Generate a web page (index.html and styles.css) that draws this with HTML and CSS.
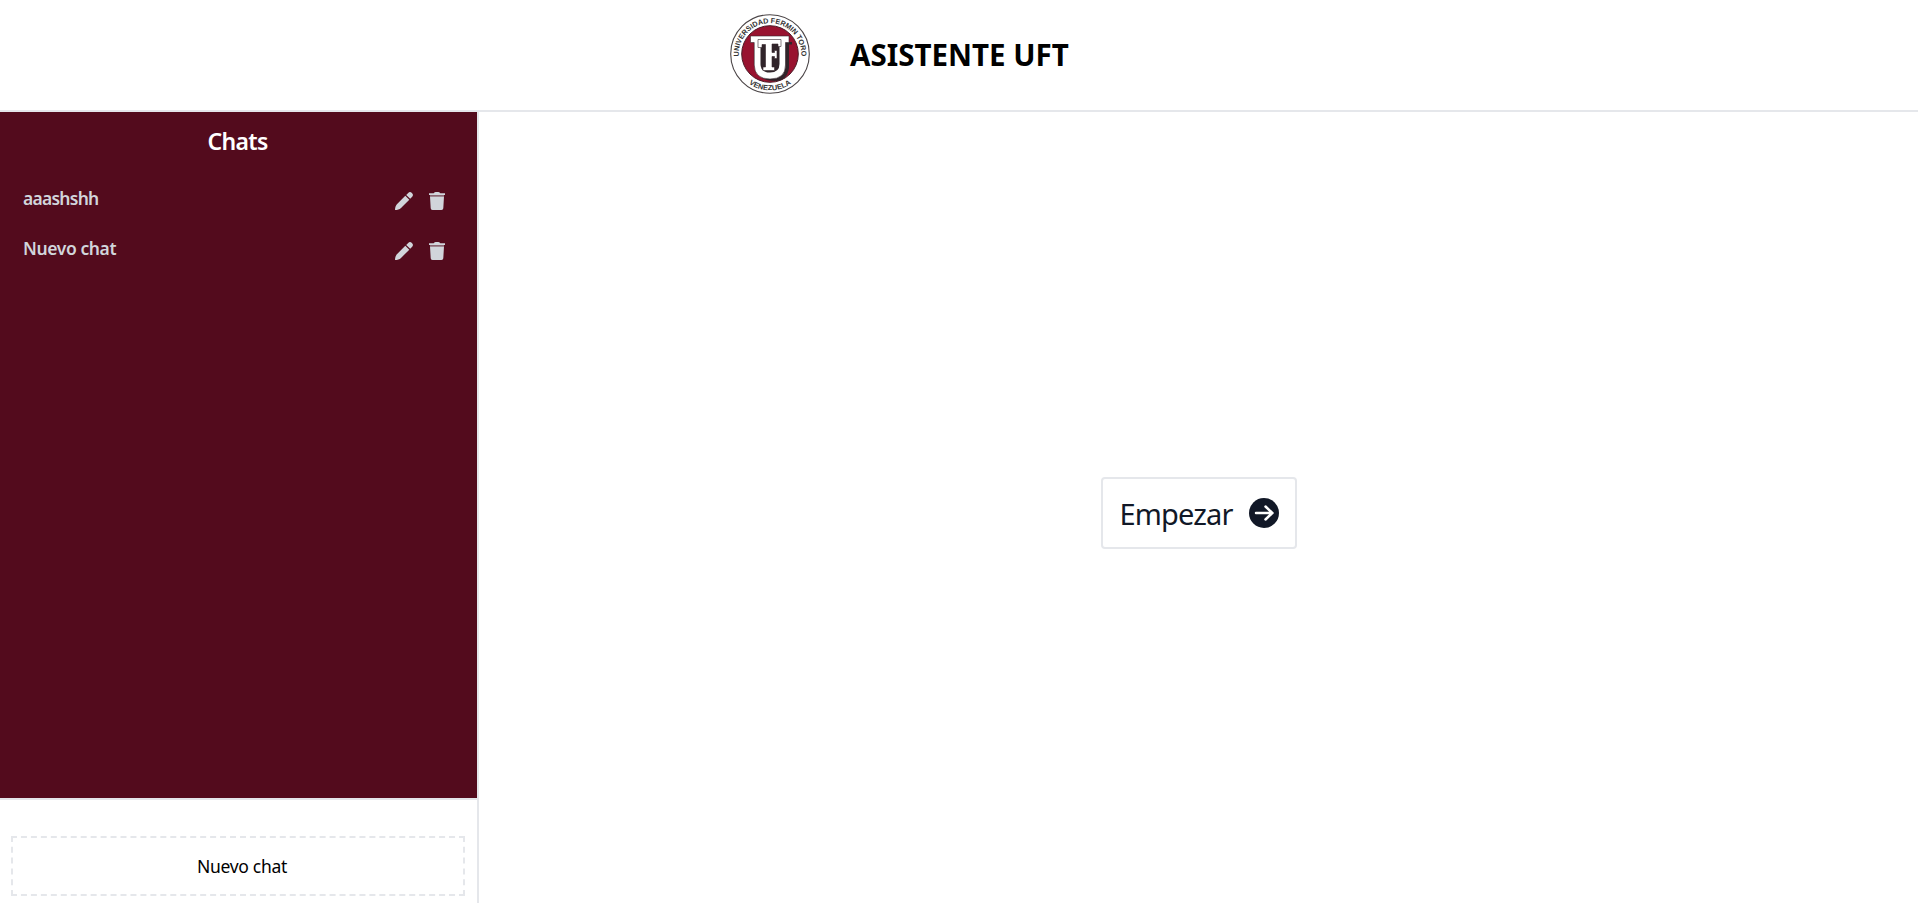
FILE: index.html
```html
<!DOCTYPE html>
<html lang="es">
<head>
<meta charset="utf-8">
<title>Asistente UFT</title>
<link rel="stylesheet" href="styles.css">
</head>
<body>
<svg class="sprite" aria-hidden="true">
  <symbol id="pencil" viewBox="0 0 18 18"><path d="M10.3 3.800 14.300 7.700 6 15.900C4.600 17.300 2.400 17.900 0 18c.1-2.300.6-4.500 1.900-5.800zM11.200 2.900l2-2c1.200-1.200 2.500-1.100 3.700.1s1.500 2.500.3 3.700l-2 2.100z"/></symbol>
  <symbol id="trash" viewBox="0 0 16 18"><path d="M0 1.300h4.700C5.200.3 6 0 8 0s2.800.3 3.300 1.300H16V3H0z"/><path opacity=".45" d="M1 3h14v1.500H1z"/><path d="M1 4.500h14l-.7 11.700Q14.200 18 12.500 18h-9Q1.800 18 1.700 16.200z"/></symbol>
</svg>
<header class="header">
  <svg class="logo" viewBox="0 0 80 80">
    <defs>
      <path id="arc-top" d="M8.800 43A31.300 31.300 0 1 1 71.200 43"/>
      <path id="arc-bottom" d="M12 63.300A36.400 36.400 0 0 0 68 63.300"/>
    </defs>
    <circle class="ring" cx="40" cy="40" r="39.300"/>
    <circle class="disc" cx="40" cy="40" r="28.300"/>
    <text class="seal-text"><textPath href="#arc-top" startOffset="50%" textLength="102" lengthAdjust="spacingAndGlyphs">UNIVERSIDAD FERMIN TORO</textPath></text>
    <text class="seal-text"><textPath href="#arc-bottom" startOffset="50%" textLength="45" lengthAdjust="spacingAndGlyphs">VENEZUELA</textPath></text>
    <path class="mono-shadow" d="M24 28h38v2.500h-3V54q-2 13-14 13-9 0-14-4L24 50z"/>
    <path class="mono" d="M20.500 22h38.500v6.500h-3.500V51q0 14-15.500 14T24.200 51V28.500h-3.700z"/>
    <path class="mono-shadow" d="M30.500 28h19v22q0 8.500-9.500 8.500t-9.500-8.500z"/>
    <path class="mono letters" d="M28 25.500h23v7h-3v-2.500h-6v8.500h2.500v-2h2.500v8h-2.500v-2H42V53h2.500v3.500H33V53h2.500V30.500H32v3h-4z"/>
  </svg>
  <h1 class="title">ASISTENTE UFT</h1>
</header>
<div class="layout">
  <aside class="sidebar">
    <div class="chats">
      <h2 class="chats-title">Chats</h2>
      <div class="chat"><span class="chat-name first">aaashshh</span><svg class="pencil"><use href="#pencil"/></svg><svg class="trash"><use href="#trash"/></svg></div>
      <div class="chat"><span class="chat-name">Nuevo chat</span><svg class="pencil"><use href="#pencil"/></svg><svg class="trash"><use href="#trash"/></svg></div>
    </div>
    <div class="new-area"><button class="new-chat"><span>Nuevo chat</span></button></div>
  </aside>
  <main class="main">
    <button class="start"><span class="start-label">Empezar</span>
      <svg class="arrow" viewBox="0 0 30 30"><circle cx="15" cy="15" r="15"/><path d="M7 15h16.500M16.500 8.500 23.300 15l-6.800 6.500"/></svg>
    </button>
  </main>
</div>
</body>
</html>
```
FILE: styles.css
```css
* { box-sizing: border-box; }
body { margin: 0; height: 903px; display: flex; flex-direction: column; overflow: hidden; background: #fff; color: #000; font-family: "Noto Sans", sans-serif; }
h1, h2 { margin: 0; }
button { font: inherit; background: #fff; border: 2px solid #e5e7eb; padding: 0; }
.sprite { position: absolute; width: 0; height: 0; }
.header { height: 112px; flex: none; display: flex; align-items: flex-start; padding: 14px 0 0 730px; border-bottom: 2px solid #e5e7eb; }
.logo { width: 80px; height: 80px; margin-right: 40px; }
.title { font-size: 29.5px; line-height: 40px; margin-top: 21px; font-weight: 700; white-space: nowrap; }
.ring { fill: #fff; stroke: #4b4547; stroke-width: 1.1; }
.disc { fill: #98122f; stroke: #4b1b27; stroke-width: 1; }
.seal-text { font: 700 7.300px "Liberation Sans", sans-serif; fill: #333; text-anchor: middle; }
.mono { fill: #fff; stroke: #35272d; stroke-width: .6; }
.mono-shadow { fill: #30242a; }
.layout { flex: 1; display: flex; min-height: 0; }
.sidebar { width: 479px; display: flex; flex-direction: column; border-right: 2px solid #e5e7eb; }
.chats { height: 688px; flex: none; background: #530b1d; background-clip: padding-box; border-bottom: 2px solid #e5e7eb; }
.chats-title { height: 62px; padding: 13px 2px 0 0; text-align: center; font-size: 23px; line-height: 32px; font-weight: 600; letter-spacing: -.65px; color: #fff; }
.chat { height: 50px; display: flex; align-items: flex-start; padding: 18px 32px 0 23px; color: #d1d5db; fill: #d1d5db; }
.chat-name { flex: 1; font-size: 17.500px; line-height: 24px; margin-top: -6px; font-weight: 600; letter-spacing: -.4px; }
.chat-name.first { letter-spacing: -.75px; }
.pencil { width: 18px; height: 18px; margin-right: 16px; }
.trash { width: 16px; height: 18px; }
.new-area { padding: 36px 12px 0 11px; }
.new-chat { display: flex; justify-content: center; align-items: center; width: 100%; height: 60px; border-style: dashed; font-size: 17.500px; letter-spacing: -.3px; padding-left: 8px; }
.main { flex: 1; display: flex; justify-content: center; align-items: center; padding-top: 11px; }
.start { width: 196px; height: 72px; display: flex; align-items: center; justify-content: space-between; padding: 0 16px 0 17px; border-radius: 4px; color: #111827; font-size: 29px; letter-spacing: -.85px; }
.arrow { width: 30px; height: 30px; fill: #111827; }
.arrow path { fill: none; stroke: #fff; stroke-width: 2.500; stroke-linecap: round; stroke-linejoin: round; }
```
